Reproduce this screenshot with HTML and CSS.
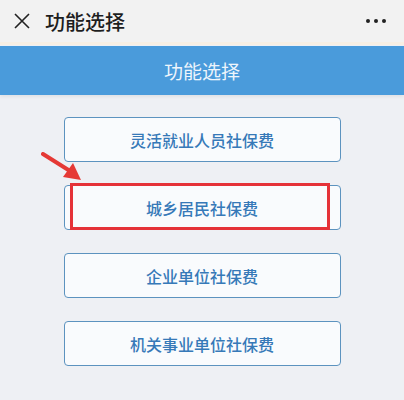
FILE: index.html
```html
<!DOCTYPE html>
<html lang="zh-CN">
    <head>
        <meta charset="UTF-8">
        <meta name="viewport" content="width=device-width, initial-scale=1.0">
        <title>功能选择</title>
        <link rel="stylesheet" href="styles.css">
    </head>
    <body>
        <div class="topbar">
            <svg class="close" width="16" height="16" viewBox="0 0 16 16">
                <path d="M1 1 L15 15 M15 1 L1 15" stroke="#222" stroke-width="1.6" fill="none"/>
            </svg>
            <span class="topbar-title">功能选择</span>
            <span class="more"><i></i><i></i><i></i></span>
        </div>

        <div class="header">功能选择</div>

        <div class="menu">
            <button class="item">灵活就业人员社保费</button>
            <div class="item-wrap">
                <button class="item">城乡居民社保费</button>
                <div class="highlight"></div>
                <svg class="arrow" width="44" height="32" viewBox="0 0 44 32">
                    <path d="M2 2 L29 19" stroke="#e53935" stroke-width="4" stroke-linecap="round" fill="none"/>
                    <path d="M40 28 L22 25 L32 11 Z" fill="#e53935"/>
                </svg>
            </div>
            <button class="item">企业单位社保费</button>
            <button class="item">机关事业单位社保费</button>
        </div>
    </body>
</html>
```

FILE: styles.css
```css
body {
    margin: 0;
    background-color: #eef0f4;
    font-family: "Noto Sans CJK SC", "Noto Sans", sans-serif;
    width: 404px;
    height: 400px;
    overflow: hidden;
}

.topbar {
    height: 42px;
    background-color: #f2f2f2;
    display: flex;
    align-items: center;
    padding: 0 14px 0 14px;
    border-bottom: 3px solid #f7efe4;
}

.close {
    margin-right: 15px;
}

.topbar-title {
    font-size: 20px;
    font-weight: 500;
    color: #1e1e1e;
    flex: 1;
}

.more {
    display: flex;
    gap: 4px;
    margin-right: 4px;
}

.more i {
    width: 4px;
    height: 4px;
    border-radius: 50%;
    background-color: #222;
}

.header {
    margin-top: 1px;
    height: 49px;
    background-color: #4a9bdb;
    color: #eef5fc;
    font-size: 19px;
    display: flex;
    align-items: center;
    justify-content: center;
    box-shadow: 0 2px 3px rgba(0, 0, 0, 0.06);
}

.menu {
    display: flex;
    flex-direction: column;
    align-items: center;
    gap: 23px;
    padding-top: 22px;
}

.item {
    width: 277px;
    height: 45px;
    background-color: #f9fbfd;
    border: 1.5px solid #5c93bf;
    border-radius: 4px;
    color: #3679b8;
    font-family: inherit;
    font-size: 16px;
    font-weight: 500;
    display: block;
}

.item-wrap {
    position: relative;
}

.highlight {
    position: absolute;
    left: 6px;
    right: 11px;
    top: -2px;
    bottom: 0;
    border: 3.5px solid #e53238;
}

.arrow {
    position: absolute;
    left: -23px;
    top: -33px;
}
```
